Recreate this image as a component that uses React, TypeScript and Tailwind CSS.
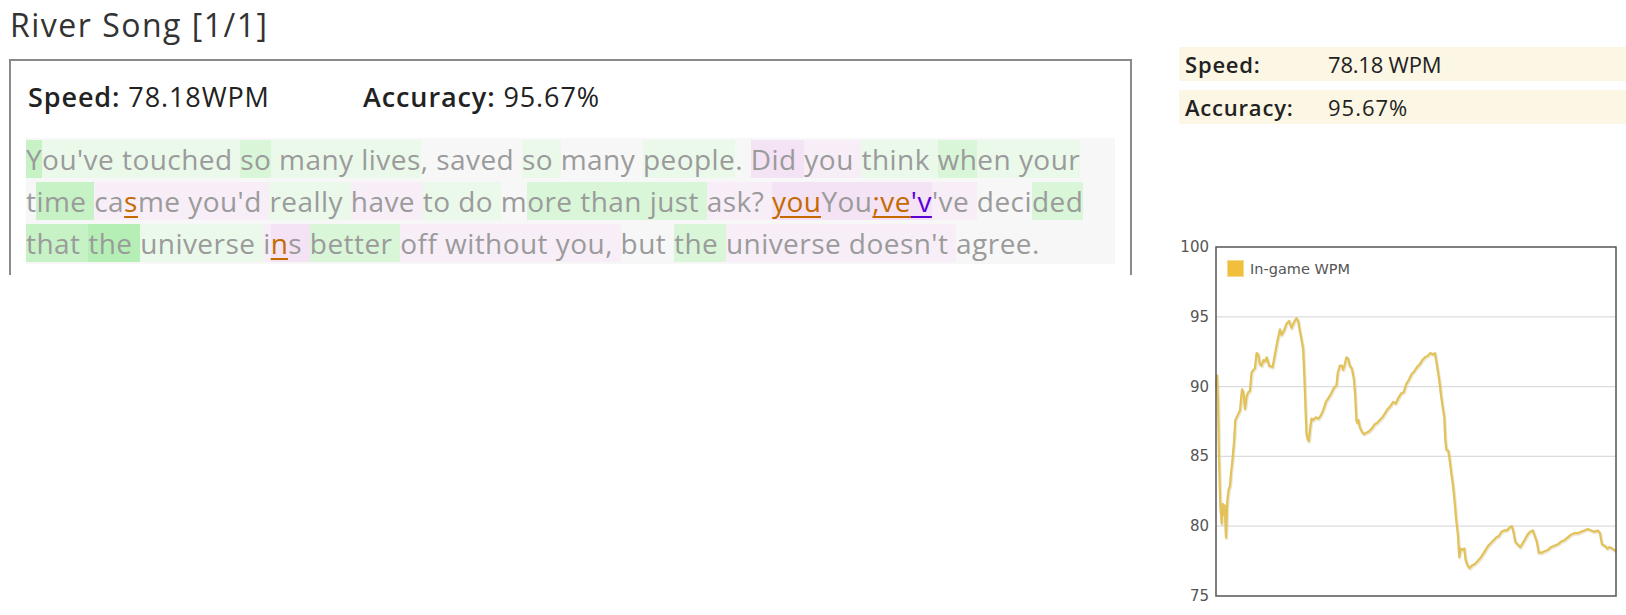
import React from "react";

const BG: Record<string, string> = {
  n: "",
  g1: "bg-[#ebf9eb]",
  g2: "bg-[#d9f6d9]",
  g3: "bg-[#c6f2c6]",
  g4: "bg-[#b5efb5]",
  p1: "bg-[#f8eef8]",
  p2: "bg-[#f4e2f5]",
  p3: "bg-[#efd5f2]",
};

const ERR: Record<string, string> = {
  o: "text-[#c66a00] underline decoration-2 underline-offset-[4px]",
  v: "text-[#5b00d9] underline decoration-2 underline-offset-[4px]",
};

type Seg = [string, string, string?];

const lines: Seg[][] = [
  [
    ["Y", "g3"],
    ["ou've ", "g1"],
    ["touched ", "g1"],
    ["so", "g2"],
    [" many ", "g1"],
    ["lives", "g1"],
    [", saved ", "n"],
    ["so ", "g1"],
    ["many ", "n"],
    ["people", "g1"],
    [". ", "n"],
    ["Did ", "p2"],
    ["you ", "p1"],
    ["think ", "g1"],
    ["wh", "g2"],
    ["en ", "g1"],
    ["your", "g1"],
  ],
  [
    ["t", "n"],
    ["ime ", "g3"],
    ["ca", "p1"],
    ["s", "p1", "o"],
    ["me you'd ", "p1"],
    ["really ", "g1"],
    ["have ", "p1"],
    ["to do ", "g1"],
    ["m", "n"],
    ["ore ", "g2"],
    ["than ", "g2"],
    ["just ", "g2"],
    ["ask? ", "p1"],
    ["you", "p2", "o"],
    ["You", "p2"],
    [";ve", "p2", "o"],
    ["'v", "p2", "v"],
    ["'ve ", "p1"],
    ["deci", "n"],
    ["ded", "g2"],
  ],
  [
    ["that ", "g3"],
    ["the ", "g4"],
    ["universe ", "g1"],
    ["i", "p1"],
    ["n", "p2", "o"],
    ["s ", "p2"],
    ["better ", "g2"],
    ["off without you, ", "p1"],
    ["but ", "n"],
    ["the ", "g2"],
    ["universe doesn't ", "p1"],
    ["agree.", "n"],
  ],
];

const raw: [number, number][] = [
  [169, 90.0], [171, 90.8], [174, 89], [177, 85], [181, 81.5], [185, 80.2], [188, 81.6], [191, 80.8], [194, 81.5], [198, 79.2],
  [202, 81.8], [206, 82.6], [210, 82.9], [213, 83.8], [217, 84.6], [222, 86.0], [226, 87.6], [232, 87.9], [240, 88.3], [246, 89.8],
  [250, 89.6], [255, 88.4], [260, 89.3], [265, 89.6], [270, 89.7], [275, 91.0], [280, 91.2], [285, 91.3], [290, 92.4], [295, 92.3],
  [300, 91.6], [305, 91.5], [310, 91.9], [315, 91.8], [320, 92.1], [328, 91.5], [338, 91.4], [345, 92.3], [352, 93.2], [360, 94.1],
  [365, 93.7], [372, 94.0], [380, 94.5], [388, 94.7], [395, 94.2], [402, 94.6], [410, 94.9], [415, 94.7], [420, 94.0], [426, 93.2],
  [430, 92.7], [434, 90.5], [437, 88.5], [440, 86.6], [444, 86.2], [447, 86.1], [450, 86.8], [455, 87.7], [460, 87.6], [468, 87.8],
  [476, 87.7], [482, 87.9], [490, 88.3], [498, 88.9], [506, 89.2], [514, 89.5], [522, 89.9], [530, 90.1], [534, 91.0], [540, 91.5],
  [546, 91.5], [550, 91.2], [555, 91.6], [560, 92.1], [565, 92.0], [570, 91.5], [576, 91.3], [582, 90.6], [586, 89.5], [590, 87.6],
  [593, 87.4], [596, 87.6], [600, 87.1], [606, 86.8], [612, 86.6], [620, 86.7], [628, 86.8], [636, 87.0], [645, 87.3], [652, 87.4],
  [660, 87.6], [668, 87.8], [676, 88.1], [684, 88.4], [692, 88.6], [700, 88.9], [708, 88.8], [716, 89.2], [724, 89.5], [732, 89.6],
  [740, 90.2], [748, 90.5], [756, 90.9], [764, 91.1], [772, 91.4], [780, 91.6], [788, 91.9], [796, 92.1], [804, 92.2], [812, 92.4],
  [820, 92.3], [826, 92.4], [832, 91.5], [838, 90.6], [844, 89.4], [850, 88.4], [854, 87.8], [857, 86.2], [860, 85.5], [866, 85.4],
  [870, 84.8], [875, 83.8], [880, 83.0], [885, 81.8], [890, 80.4], [895, 79.4], [899, 77.8], [903, 78.4], [908, 78.3], [914, 78.4],
  [918, 77.6], [924, 77.2], [930, 77.0], [938, 77.2], [946, 77.3], [954, 77.5], [962, 77.7], [970, 78.0], [978, 78.3], [986, 78.6],
  [994, 78.8], [1002, 79.0], [1010, 79.2], [1018, 79.3], [1026, 79.6], [1034, 79.7], [1042, 79.7], [1050, 79.9], [1057, 80.0], [1062, 79.6],
  [1067, 78.9], [1074, 78.7], [1082, 78.5], [1090, 78.8], [1097, 79.1], [1104, 79.4], [1112, 79.6], [1120, 79.7], [1126, 79.3], [1132, 78.9],
  [1138, 78.1], [1146, 78.1], [1155, 78.2], [1165, 78.3], [1175, 78.5], [1185, 78.6], [1195, 78.7], [1205, 78.9], [1215, 79.0], [1225, 79.2],
  [1235, 79.4], [1245, 79.5], [1255, 79.5], [1265, 79.6], [1275, 79.7], [1285, 79.8], [1295, 79.7], [1305, 79.6], [1315, 79.7], [1322, 79.5],
  [1328, 78.7], [1336, 78.6], [1344, 78.4], [1350, 78.5], [1358, 78.4], [1365, 78.3], [1370, 78.2],
];

const PX = 37;
const PY = 12;
const PW = 400;
const PH = 349;
const yOf = (v: number) => PY + ((100 - v) / 25) * PH;
const path = raw
  .map(([zx, v], i) => `${i === 0 ? "M" : "L"}${(PX + ((zx - 168) / 1202) * PW).toFixed(1)},${yOf(v).toFixed(1)}`)
  .join(" ");

function Chart() {
  const ticks = [100, 95, 90, 85, 80, 75];
  return (
    <svg width="447" height="380" className="block mt-[111px]" style={{ fontFamily: "'DejaVu Sans', sans-serif" }}>
      {[95, 90, 85, 80].map((t) => (
        <line key={t} x1={PX} x2={PX + PW} y1={yOf(t)} y2={yOf(t)} stroke="#dcdcdc" strokeWidth="1.2" />
      ))}
      {ticks.map((t) => (
        <text key={t} x={30} y={yOf(t) + 5} textAnchor="end" fontSize="15" fill="#555">
          {t}
        </text>
      ))}
      <path d={path} fill="none" stroke="#d8cfa8" strokeWidth="3.2" strokeLinejoin="round" opacity="0.5" transform="translate(0.6,1)" />
      <path d={path} fill="none" stroke="#e3c25a" strokeWidth="2.2" strokeLinejoin="round" />
      <rect x={PX} y={PY} width={PW} height={PH} fill="none" stroke="#555" strokeWidth="1.5" />
      <rect x={48.5} y={25.5} width={16} height={16} fill="#f0c03c" stroke="#f5da90" strokeWidth="1" />
      <text x={71} y={39} fontSize="14.5" fill="#555">
        In-game WPM
      </text>
    </svg>
  );
}

export default function App() {
  return (
    <div className="w-[1626px] h-[615px] bg-white flex font-['Open_Sans',sans-serif] overflow-hidden">
      <div className="w-[1179px] pl-[9px] flex flex-col">
        <h1 className="text-[32px] leading-[36px] tracking-[1.5px] text-[#333] pt-[7px] pl-px">River Song [1/1]</h1>
        <div className="mt-[16px] w-[1123px] h-[216px] border-t-2 border-x-2 border-[#8a8a8a] px-[15px] pt-[20px]">
          <div className="flex text-[27px] leading-[32px] tracking-[0.9px] text-[#222] pl-[2px]">
            <div className="w-[335px]">
              <span className="font-semibold">Speed:</span> 78.18WPM
            </div>
            <div>
              <span className="font-semibold">Accuracy:</span> 95.67%
            </div>
          </div>
          <div className="mt-[25px] bg-[#f7f7f7] text-[28px] leading-[42px] tracking-[0.45px] text-[#9b9b9b] whitespace-pre">
            {lines.map((ln, i) => (
              <div key={i}>
                {ln.map(([t, b, e], j) => (
                  <span key={j} className={`${BG[b]} ${e ? ERR[e] : ""}`}>
                    {t}
                  </span>
                ))}
              </div>
            ))}
          </div>
        </div>
      </div>
      <div className="flex-1 pt-[47px] flex flex-col">
        <div className="flex flex-col gap-[9px] text-[22px] text-[#222]">
          <div className="h-[34px] bg-[#fcf6e4] flex items-center pl-[6px]">
            <span className="w-[143px] font-semibold tracking-[0.8px]">Speed:</span>
            <span className="tracking-[-0.2px]">78.18 WPM</span>
          </div>
          <div className="h-[34px] bg-[#fcf6e4] flex items-center pl-[6px]">
            <span className="w-[143px] font-semibold tracking-[0.8px]">Accuracy:</span>
            <span className="tracking-[1px]">95.67%</span>
          </div>
        </div>
        <Chart />
      </div>
    </div>
  );
}
